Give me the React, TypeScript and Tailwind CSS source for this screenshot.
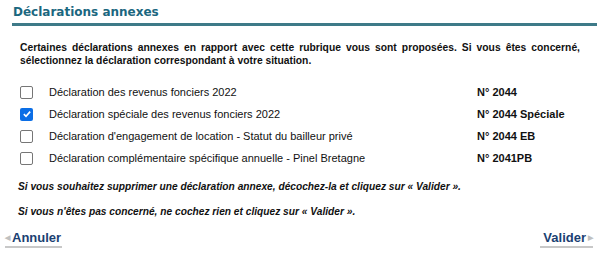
import React from 'react';

const rows = [
  { label: 'Déclaration des revenus fonciers 2022', code: 'N° 2044', checked: false },
  { label: 'Déclaration spéciale des revenus fonciers 2022', code: 'N° 2044 Spéciale', checked: true },
  { label: "Déclaration d'engagement de location - Statut du bailleur privé", code: 'N° 2044 EB', checked: false },
  { label: 'Déclaration complémentaire spécifique annuelle - Pinel Bretagne', code: 'N° 2041PB', checked: false },
];

function Checkbox({ checked }: { checked: boolean }) {
  return checked ? (
    <span className="flex h-[13px] w-[13px] items-center justify-center rounded-[2px] bg-[#0b6ee6]">
      <svg viewBox="0 0 12 12" className="h-[10px] w-[10px]">
        <path d="M2.2 6.2 L4.8 8.7 L9.8 3.2" fill="none" stroke="white" strokeWidth="2" />
      </svg>
    </span>
  ) : (
    <span className="block h-[13px] w-[13px] rounded-[2px] border border-[#767676] bg-white" />
  );
}

export default function App() {
  return (
    <div className="h-[259px] w-[606px] overflow-hidden bg-white font-['Liberation_Sans',Arial,sans-serif] text-[#111]">
      <div className="ml-[12px] mr-[9px] border-b-[3px] border-[#3e7a88] pt-[3px] pb-[2px]">
        <h1 className="pl-[1px] font-['DejaVu_Sans',Verdana,sans-serif] text-[12px] leading-[18px] font-bold text-[#1b6780]">
          Déclarations annexes
        </h1>
      </div>

      <div className="mt-[15px] ml-[20px] mr-[26px] text-[10.3px] leading-[13px] font-bold">
        <p className="text-justify [text-align-last:justify]">
          Certaines déclarations annexes en rapport avec cette rubrique vous sont proposées. Si vous êtes concerné,
        </p>
        <p>sélectionnez la déclaration correspondant à votre situation.</p>
      </div>

      <div className="mt-[14px] flex flex-col">
        {rows.map((r) => (
          <div key={r.code} className="flex h-[22px] items-center text-[11px]">
            <div className="ml-[20px] w-[29px]">
              <Checkbox checked={r.checked} />
            </div>
            <span className="w-[428px]">{r.label}</span>
            <span className="font-bold">{r.code}</span>
          </div>
        ))}
      </div>

      <div className="mt-[11px] ml-[18px] flex flex-col gap-[12px] text-[10.2px] leading-[13px] font-bold italic">
        <p>Si vous souhaitez supprimer une déclaration annexe, décochez-la et cliquez sur « Valider ».</p>
        <p>Si vous n'êtes pas concerné, ne cochez rien et cliquez sur « Valider ».</p>
      </div>

      <div className="mt-[12px] flex items-start justify-between px-[5px]">
        <button className="flex items-center border-b-[2px] border-[#c8c8c8] pr-[1px] pb-[1px] text-[13px] leading-[15px] font-bold text-[#1b3f72]">
          <span className="mr-[2px] text-[7px] text-[#c0c0c0]">◀</span>
          Annuler
        </button>
        <button className="mr-[8px] flex items-center border-b-[2px] border-[#c8c8c8] pl-[3px] pb-[1px] text-[13px] leading-[15px] font-bold text-[#1b3f72]">
          Valider
          <span className="ml-[2px] text-[7px] text-[#c0c0c0]">▶</span>
        </button>
      </div>
    </div>
  );
}
